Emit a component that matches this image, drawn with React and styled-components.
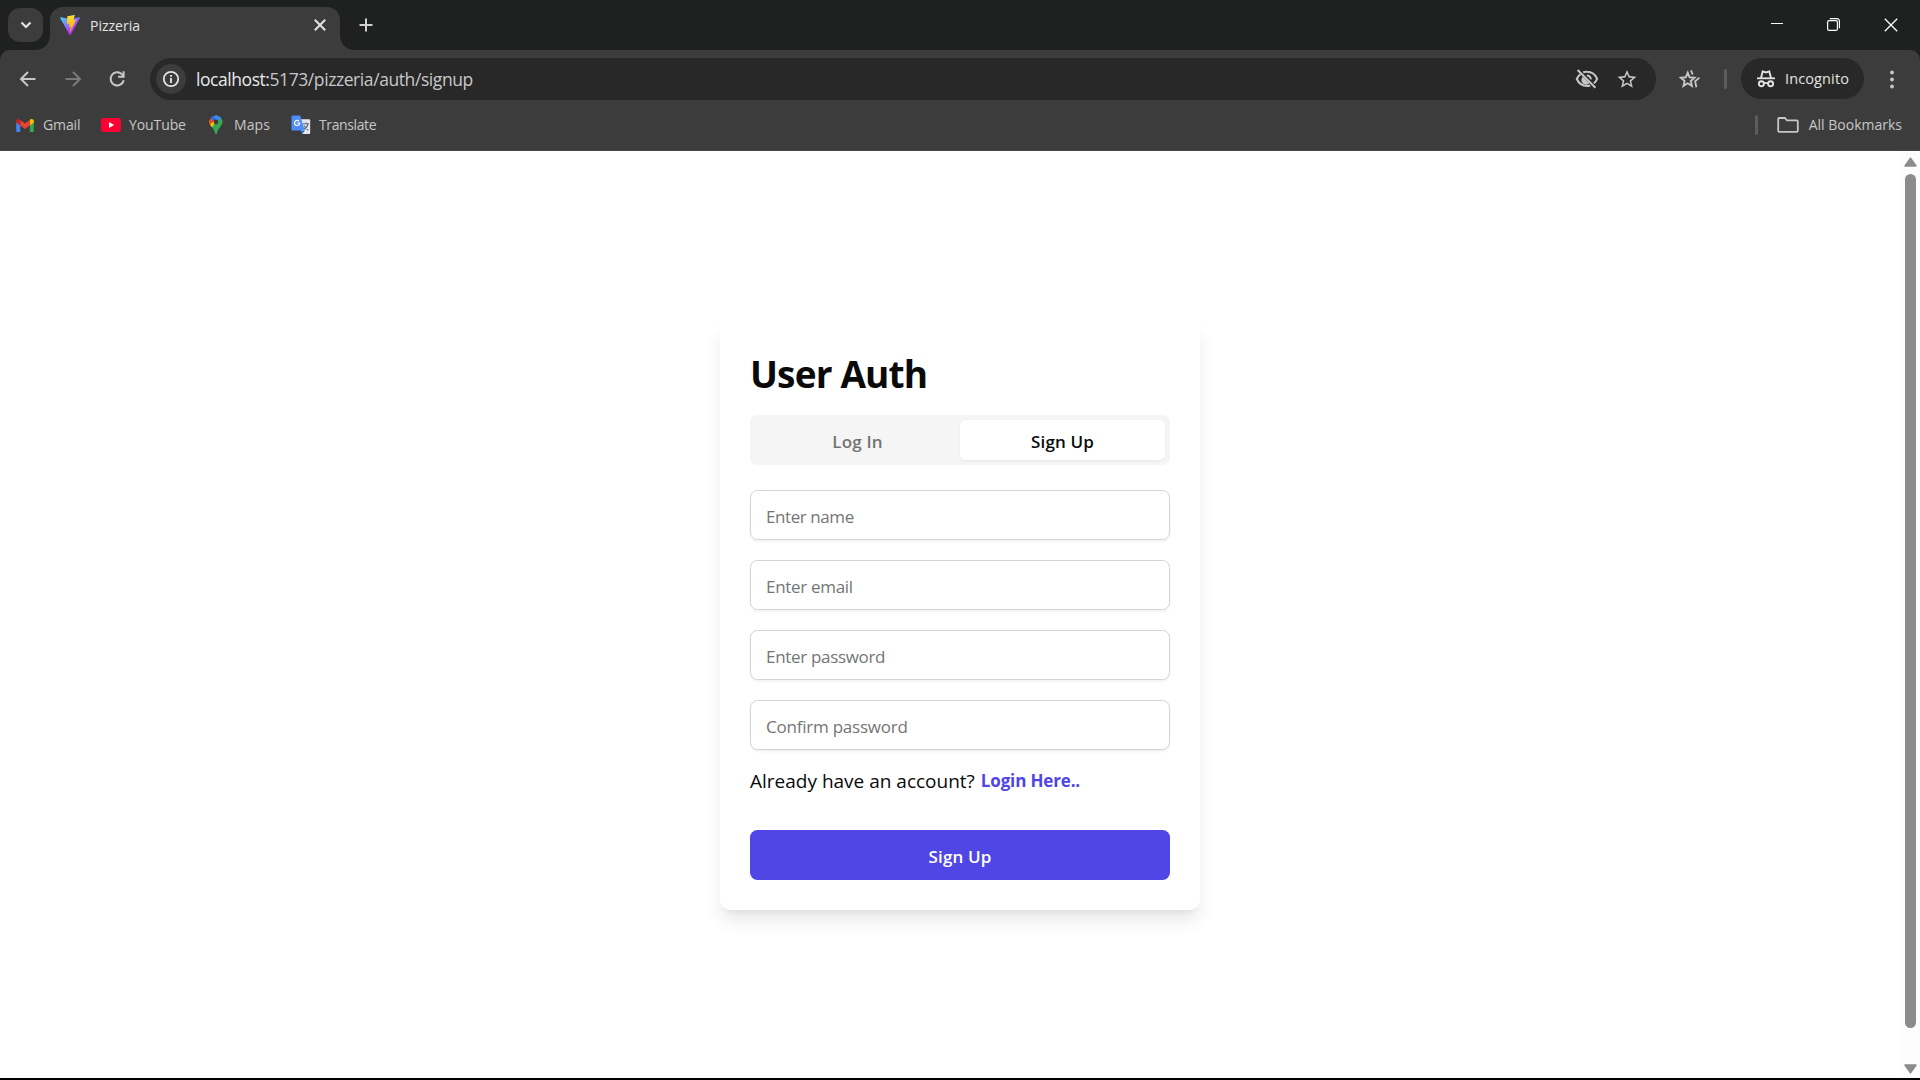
import React from "react";
import styled, { createGlobalStyle } from "styled-components";

const ui = `"Open Sans", "Noto Sans", sans-serif`;

const GlobalStyle = createGlobalStyle`
  * { box-sizing: border-box; }
  html, body { margin: 0; padding: 0; overflow: hidden; background: #000; }
  body { font-family: ${ui}; }
  button, input { font-family: inherit; }
  svg { display: block; flex: none; }
`;

const Window = styled.div`
  width: 1920px;
  height: 1080px;
  display: flex;
  flex-direction: column;
  background: #000;
  overflow: hidden;
`;

const Label = styled.span`
  font-family: ${ui};
  font-size: ${(p) => p.$size}px;
  font-weight: ${(p) => p.$weight || 400};
  letter-spacing: ${(p) => p.$track || 0}px;
  color: ${(p) => p.$color || "inherit"};
  white-space: pre;
`;

/* ---------- tab strip ---------- */
const TabStrip = styled.header`
  height: 50px;
  flex: none;
  display: flex;
  background: #1f2120;
`;

const TabSearch = styled.button`
  width: 35px;
  height: 34px;
  margin: 8px 0 0 8px;
  padding: 0;
  border: 0;
  border-radius: 12px;
  background: #3c3c3c;
  display: flex;
  align-items: center;
  justify-content: center;
`;

const Tab = styled.div`
  position: relative;
  width: 290px;
  height: 43px;
  margin: 7px 0 0 7px;
  padding: 0 14px 7px 10px;
  border-radius: 13px 13px 0 0;
  background: #3c3c3c;
  display: flex;
  align-items: center;
  gap: 10px;
  &::before,
  &::after {
    content: "";
    position: absolute;
    bottom: 0;
    width: 14px;
    height: 14px;
  }
  &::before {
    left: -14px;
    background: radial-gradient(circle at 0 0, transparent 13.5px, #3c3c3c 14.2px);
  }
  &::after {
    right: -14px;
    background: radial-gradient(circle at 100% 0, transparent 13.5px, #3c3c3c 14.2px);
  }
`;

const TabTitle = styled.div`
  flex: 1;
  display: flex;
`;

const NewTab = styled.div`
  margin: 16px 0 0 17px;
`;

const WindowButtons = styled.div`
  margin-left: auto;
  height: 49px;
  display: flex;
  align-items: center;
  gap: 44px;
  padding-right: 22px;
`;

/* ---------- toolbar ---------- */
const ToolbarBack = styled.div`
  flex: none;
  background: #1f2120;
`;

const Chrome = styled.div`
  height: 101px;
  background: #3c3c3c;
  border-radius: 10px 10px 0 0;
  border-bottom: 1px solid #4a4649;
`;

const Toolbar = styled.div`
  height: 50px;
  padding: 8px 18px 0 16px;
  display: flex;
`;

const NavButtons = styled.nav`
  width: 134px;
  height: 41px;
  display: flex;
  align-items: center;
  gap: 20.5px;
`;

const Omnibox = styled.div`
  width: 1506px;
  height: 42px;
  padding: 0 17px 0 6px;
  border-radius: 21px;
  background: #282828;
  display: flex;
  align-items: center;
`;

const SiteInfo = styled.div`
  width: 30px;
  height: 30px;
  margin-right: 10px;
  border-radius: 50%;
  background: #3c3c3c;
  display: flex;
  align-items: center;
  justify-content: center;
`;

const Address = styled.div`
  flex: 1;
  display: flex;
`;

const OmniActions = styled.div`
  display: flex;
  align-items: center;
  gap: 16px;
`;

const ToolbarEnd = styled.div`
  height: 41px;
  flex: 1;
  display: flex;
  align-items: center;
  padding-left: 21px;
`;

const Divider = styled.i`
  width: 3px;
  height: 20px;
  border-radius: 2px;
  background: #5c5c5c;
  margin: ${(p) => p.$margin || 0};
`;

const IncognitoChip = styled.div`
  width: 123px;
  height: 41px;
  padding-left: 15px;
  border-radius: 21px;
  background: #282828;
  display: flex;
  align-items: center;
  gap: 9px;
`;

const MenuDots = styled.div`
  margin-left: auto;
`;

/* ---------- bookmarks ---------- */
const Bookmarks = styled.div`
  height: 50px;
  display: flex;
  align-items: center;
  padding: 0 18px 0 15px;
`;

const Bookmark = styled.div`
  width: ${(p) => p.$width}px;
  display: flex;
  align-items: center;
  gap: 8px;
`;

const AllBookmarks = styled.div`
  margin-left: auto;
  display: flex;
  align-items: center;
`;

const BookmarkName = styled(Label)`
  margin: -2px 0 0 ${(p) => p.$indent || 0}px;
`;

/* ---------- page ---------- */
const Viewport = styled.main`
  height: 927px;
  flex: none;
  display: flex;
  background: #fff;
`;

const Page = styled.div`
  flex: 1;
  display: flex;
  justify-content: center;
  align-items: flex-start;
  padding: 169px 0 0 19px;
`;

const Scrollbar = styled.div`
  width: 19px;
  height: 927px;
  background: #fcfcfc;
  display: flex;
  flex-direction: column;
  align-items: center;
  padding: 6px 0 4px 0;
`;

const Thumb = styled.div`
  width: 11px;
  height: 854px;
  margin: 7px 0 36px;
  border-radius: 6px;
  background: #8b8b8b;
`;

const Card = styled.section`
  width: 480px;
  height: 590px;
  padding: 30px;
  border-radius: 10px;
  background: #fff;
  box-shadow: 0 12.5px 18.75px -3.75px rgba(0, 0, 0, 0.1), 0 5px 7.5px -5px rgba(0, 0, 0, 0.1);
`;

const Title = styled.h1`
  height: 45px;
  margin: 1px 0 19px;
  line-height: 45px;
  font-size: 37.5px;
  display: flex;
`;

const Tabs = styled.div`
  height: 50px;
  padding: 5px;
  border-radius: 7.5px;
  background: #f5f5f5;
  display: flex;
`;

const TabOption = styled.button`
  flex: 1;
  padding: 2px 0 0;
  border: 0;
  border-radius: 5px;
  background: ${(p) => (p.$active ? "#fff" : "transparent")};
  box-shadow: ${(p) => (p.$active ? "0 1px 2.5px rgba(0,0,0,0.06)" : "none")};
`;

const Fields = styled.div`
  display: flex;
  flex-direction: column;
  gap: 20px;
  padding-top: 25px;
`;

const Field = styled.input`
  width: 420px;
  height: 50px;
  padding: 3px 15px 0;
  border: 1px solid #d1d5db;
  border-radius: 7.5px;
  background: #fff;
  box-shadow: 0 1.25px 2.5px rgba(0, 0, 0, 0.05);
  font-size: 17px;
  letter-spacing: ${(p) => p.$track || 0}px;
  outline: 0;
  &::placeholder {
    color: #757575;
    opacity: 1;
  }
`;

const Prompt = styled.p`
  height: 30px;
  margin: 16px 0 34px;
  line-height: 30px;
  display: flex;
  gap: 6px;
`;

const Submit = styled.button`
  width: 420px;
  height: 50px;
  padding: 3px 0 0;
  border: 0;
  border-radius: 7.5px;
  background: #4f46e5;
`;

/* ---------- drawings ---------- */
const stroke = (w, c = "#c7c7c7") => ({ fill: "none", stroke: c, strokeWidth: w });

const ChevronDown = () => (
  <svg width="12" height="8" viewBox="0 0 12 8"><path d="M1.5 1.5 6 6l4.500-4.500" {...stroke(2.2, "#e3e3e3")} /></svg>
);

const ViteLogo = () => (
  <svg width="20" height="20" viewBox="0 0 256 257">
    <defs>
      <linearGradient id="va" x1="-.8%" x2="57.6%" y1="7.7%" y2="78.4%"><stop offset="0" stopColor="#41D1FF" /><stop offset="1" stopColor="#BD34FE" /></linearGradient>
      <linearGradient id="vb" x1="43.4%" x2="50.3%" y1="2.2%" y2="89%"><stop offset="0" stopColor="#FFEA83" /><stop offset=".083" stopColor="#FFDD35" /><stop offset="1" stopColor="#FFA800" /></linearGradient>
    </defs>
    <path fill="url(#va)" d="M255.153 37.938 134.897 252.976c-2.483 4.44-8.862 4.466-11.382.048L.875 37.958c-2.746-4.814 1.371-10.646 6.827-9.67l120.385 21.517a6.537 6.537 0 0 0 2.322-.004l117.867-21.483c5.438-.991 9.574 4.796 6.877 9.62Z" />
    <path fill="url(#vb)" d="M185.432.063 96.44 17.501a3.268 3.268 0 0 0-2.634 3.014l-5.474 92.456a3.268 3.268 0 0 0 3.997 3.378l24.777-5.718c2.318-.535 4.413 1.507 3.936 3.838l-7.361 36.047c-.495 2.426 1.782 4.5 4.151 3.78l15.304-4.649c2.372-.72 4.652 1.36 4.15 3.788l-11.698 56.621c-.732 3.542 3.979 5.473 5.943 2.437l1.313-2.028 72.516-144.72c1.215-2.423-.88-5.186-3.54-4.672l-25.505 4.922c-2.396.462-4.435-1.770-3.759-4.114l16.646-57.705c.677-2.350-1.370-4.583-3.769-4.113Z" />
  </svg>
);

const Cross = ({ size, w, color }) => (
  <svg width={size} height={size} viewBox={`0 0 ${size} ${size}`}>
    <path d={`M.8.8 ${size - 0.8} ${size - 0.8}M${size - 0.8}.8.8 ${size - 0.8}`} {...stroke(w, color)} />
  </svg>
);

const Plus = () => (
  <svg width="18" height="18" viewBox="0 0 18 18"><path d="M9 2.500v13M2.500 9h13" {...stroke(2, "#d0d0d0")} /></svg>
);

const Minimize = () => (
  <svg width="12" height="13" viewBox="0 0 12 13"><path d="M0 5.500h12" {...stroke(1, "#fff")} /></svg>
);

const Restore = () => (
  <svg width="13" height="13" viewBox="0 0 13 13">
    <rect x=".6" y="2.600" width="9.800" height="9.800" rx="1.500" {...stroke(1.2, "#fff")} />
    <path d="M2.800.6h7.200a2.400 2.400 0 0 1 2.400 2.400v7.200" {...stroke(1.2, "#fff")} />
  </svg>
);

const Arrow = ({ flip, color }) => (
  <svg width="24" height="24" viewBox="0 0 24 24">
    <path transform={flip ? "translate(24 0) scale(-1 1)" : undefined} d="M19.500 12H5.500M12 5l-7 7 7 7" {...stroke(2, color)} />
  </svg>
);

const Reload = () => (
  <svg width="24" height="24" viewBox="0 0 24 24">
    <path d="M18.700 13.200A6.600 6.600 0 1 1 16.800 7.100l2 2" {...stroke(2)} />
    <path d="M18.600 4.300v5.500h-5.500" {...stroke(2)} />
  </svg>
);

const Info = () => (
  <svg width="18" height="18" viewBox="0 0 18 18">
    <circle cx="9" cy="9" r="7.200" {...stroke(1.8, "#e3e3e3")} />
    <path d="M9 8v5M9 4.900v1.900" {...stroke(1.9, "#e3e3e3")} />
  </svg>
);

const EyeOff = () => (
  <svg width="24" height="24" viewBox="0 0 24 24">
    <path d="M8.200 5.200A11 11 0 0 1 12 4.800c4.500 0 8.300 2.800 10.200 7a11.500 11.500 0 0 1-3.400 4.500M15.200 18.500a11 11 0 0 1-3.200.5c-4.500 0-8.300-2.800-10.200-7a11.500 11.500 0 0 1 3.600-4.700" {...stroke(2)} />
    <path d="M7.800 9.700a4.600 4.600 0 0 0 6.600 6.600Z" fill="#c7c7c7" />
    <path d="M11.800 8.400a3.800 3.800 0 0 1 4 4" {...stroke(2)} />
    <path d="m2.600 3 17.800 17.800" {...stroke(2)} />
  </svg>
);

const Star = () => (
  <svg width="24" height="24" viewBox="0 0 24 24">
    <path fill="#c7c7c7" d="m22 9.240-7.190-.62L12 2 9.190 8.630 2 9.240l5.460 4.730L5.820 21 12 17.270 18.180 21l-1.630-7.030L22 9.240zM12 15.400l-3.760 2.270 1-4.280-3.320-2.880 4.380-.38L12 6.100l1.710 4.040 4.380.38-3.320 2.880 1 4.280L12 15.400z" transform="translate(0.7 1) scale(.94)" />
  </svg>
);

const StarTrail = () => (
  <svg width="24" height="24" viewBox="0 0 24 24">
    <path d="M10.700 5.700l1.900 4.600 4.900.4-3.700 3.300 1.100 4.900-4.200-2.600-4.200 2.600 1.100-4.900-3.700-3.300 4.900-.4z" {...stroke(1.9)} />
    <path d="M14 3.400l1.700 4.100" {...stroke(1.800)} />
    <path d="M22.400 10.600l-4.300 3.700 1.300 5.900" {...stroke(1.800)} />
  </svg>
);

const Spy = () => (
  <svg width="20" height="20" viewBox="0 0 20 20">
    <path d="M1 9.300h18" {...stroke(1.8, "#e3e3e3")} />
    <path d="M5 9 6.700 2.400l3.300 1 3.300-1L15 9" {...stroke(1.900, "#e3e3e3")} />
    <circle cx="5.400" cy="14.800" r="2.500" {...stroke(1.9, "#e3e3e3")} />
    <circle cx="14.600" cy="14.800" r="2.500" {...stroke(1.9, "#e3e3e3")} />
    <path d="M7.900 14.500q2.100-1.200 4.200 0" {...stroke(1.6, "#e3e3e3")} />
  </svg>
);

const Dots = () => (
  <svg width="20" height="20" viewBox="0 0 20 20" fill="#c7c7c7">
    <circle cx="10" cy="3.500" r="1.900" /><circle cx="10" cy="10.500" r="1.900" /><circle cx="10" cy="17.500" r="1.900" />
  </svg>
);

const Folder = () => (
  <svg width="22" height="16" viewBox="0 0 22 16">
    <path d="M2.200 1h5.600l2.200 2.300h9.800q1 0 1 1v9.500q0 1-1 1H2.200q-1 0-1-1V2q0-1 1-1Z" {...stroke(1.8)} />
  </svg>
);

const Gmail = () => (
  <svg width="20" height="20" viewBox="0 0 20 20">
    <path fill="#4285f4" d="M1.200 6.500 5.200 9.500V17H2.400a1.200 1.200 0 0 1-1.200-1.200Z" />
    <path fill="#34a853" d="M18.800 6.500 14.800 9.500V17h2.800a1.200 1.200 0 0 0 1.200-1.200Z" />
    <path fill="#fbbc04" d="m14.800 5 .7-.7c1.300-1 3.300-.1 3.300 1.600v1.600l-4 3Z" />
    <path fill="#ea4335" d="M5.200 10.500V5L10 8.600 14.800 5v5.500L10 14.100Z" />
    <path fill="#c5221f" d="M1.200 5.900c0-1.700 2-2.600 3.300-1.600l.7.700v5.500l-4-3Z" />
  </svg>
);

const YouTube = () => (
  <svg width="20" height="20" viewBox="0 0 20 20">
    <rect y="3" width="20" height="14" rx="3" fill="#ff0033" />
    <path fill="#fff" d="m8 7 5.200 3L8 13Z" />
  </svg>
);

const MapsPin = () => (
  <svg width="20" height="20" viewBox="0 0 20 20">
    <defs><clipPath id="pin"><path d="M10 .5a6.500 6.500 0 0 1 6.500 6.500c0 3.600-4.500 6-5.600 11.300-.2 1.300-1.600 1.300-1.800 0C8 13 3.500 10.600 3.500 7A6.500 6.500 0 0 1 10 .5Z" /></clipPath></defs>
    <g clipPath="url(#pin)">
      <path fill="#34a853" d="M0 0h20v20H0Z" />
      <path fill="#fbbc04" d="M0 5h10v2L5.200 13H0Z" />
      <path fill="#ea4335" d="M0 0h6l4 7-5.500 3.500L0 8Z" />
      <path fill="#fbbc04" d="m3 10 5.500-4.500L10 7l-4.500 5.500Z" />
      <path fill="#4285f4" d="M4.500 2 10 7l6-4.500L12 0H6Z" />
      <path fill="#1a73e8" d="M4.800 3 8.500 6 10 4.600 7 0Z" />
    </g>
    <circle cx="10" cy="7" r="2.400" fill="#3c3c3c" />
  </svg>
);

const TranslateLogo = () => (
  <svg width="20" height="20" viewBox="0 0 20 20">
    <path fill="#e3e6ea" d="M8 4.200h10.200a1 1 0 0 1 1 1V18a1 1 0 0 1-1 1h-7Z" />
    <path d="M12 8.800h6M15 7.500v1.300M17 9q-1 4-4.500 5.500M13 10.500q1 2.500 4.200 4.800" {...stroke(1.1, "#5f6b7a")} />
    <path fill="#3367d6" d="m10 15.500 4 0-3 3.700Z" />
    <path fill="#4f8df6" d="M1.500.5h7.700l4.600 15H1.500a1 1 0 0 1-1-1v-13a1 1 0 0 1 1-1Z" />
    <path d="M8 6.100A2.600 2.600 0 1 0 8.700 8H6.200" {...stroke(1.200, "#fff")} />
  </svg>
);

const Triangle = ({ down }) => (
  <svg width="13" height="10" viewBox="0 0 13 10">
    <path transform={down ? "rotate(180 6.5 5)" : undefined} fill="#8b8b8b" stroke="#8b8b8b" strokeLinejoin="round" strokeWidth="1.500" d="M6.500 1.200 12 9H1Z" />
  </svg>
);

const bookmarks = [
  { name: "Gmail", Icon: Gmail, width: 86, track: -0.1 },
  { name: "YouTube", Icon: YouTube, width: 105, track: -0.1 },
  { name: "Maps", Icon: MapsPin, width: 85, track: 0.1 },
  { name: "Translate", Icon: TranslateLogo, width: 100, track: -0.38 },
];

const fields = [
  { text: "Enter name", track: -0.42 },
  { text: "Enter email", track: -0.3 },
  { text: "Enter password", track: -0.32 },
  { text: "Confirm password", track: -0.23 },
];

export default function App() {
  return (
    <Window>
      <GlobalStyle />
      <TabStrip>
        <TabSearch><ChevronDown /></TabSearch>
        <Tab>
          <ViteLogo />
          <TabTitle><Label $size={14} $color="#e3e3e3">Pizzeria</Label></TabTitle>
          <Cross size={12} w={2} color="#e3e3e3" />
        </Tab>
        <NewTab><Plus /></NewTab>
        <WindowButtons>
          <Minimize />
          <Restore />
          <Cross size={14} w={1.3} color="#fff" />
        </WindowButtons>
      </TabStrip>

      <ToolbarBack>
        <Chrome>
          <Toolbar>
            <NavButtons>
              <Arrow color="#c7c7c7" />
              <Arrow flip color="#7a7a7a" />
              <Reload />
            </NavButtons>
            <Omnibox>
              <SiteInfo><Info /></SiteInfo>
              <Address>
                <Label $size={17.5} $track={-0.44} $color="#e8e8e8">localhost:</Label>
                <Label $size={17.5} $track={-0.42} $color="#c7c7c7">5173/pizzeria/auth/signup</Label>
              </Address>
              <OmniActions>
                <EyeOff />
                <Star />
              </OmniActions>
            </Omnibox>
            <ToolbarEnd>
              <StarTrail />
              <Divider $margin="0 14px 0 23px" />
              <IncognitoChip>
                <Spy />
                <Label $size={14.5} $track={0.12} $color="#e3e3e3">Incognito</Label>
              </IncognitoChip>
              <MenuDots><Dots /></MenuDots>
            </ToolbarEnd>
          </Toolbar>
          <Bookmarks>
            {bookmarks.map(({ name, Icon, width, track }) => (
              <Bookmark key={name} $width={width}>
                <Icon />
                <BookmarkName $size={14} $track={track} $color="#c7c7c7">{name}</BookmarkName>
              </Bookmark>
            ))}
            <AllBookmarks>
              <Divider $margin="0 19px 0 0" />
              <Folder />
              <BookmarkName $indent={10} $size={14} $color="#c7c7c7">All Bookmarks</BookmarkName>
            </AllBookmarks>
          </Bookmarks>
        </Chrome>
      </ToolbarBack>

      <Viewport>
        <Page>
          <Card>
            <Title><Label $size={37} $weight={700} $track={-0.85} $color="#0a0a0a">User Auth</Label></Title>
            <Tabs>
              <TabOption><Label $size={17} $weight={600} $track={0.15} $color="#737373">Log In</Label></TabOption>
              <TabOption $active><Label $size={17} $weight={600} $track={0.15} $color="#0a0a0a">Sign Up</Label></TabOption>
            </Tabs>
            <Fields>
              {fields.map(({ text, track }) => <Field key={text} placeholder={text} $track={track} />)}
            </Fields>
            <Prompt>
              <Label $size={19} $color="#0a0a0a">Already have an account?</Label>
              <Label $size={17} $weight={700} $track={-0.15} $color="#4f46e5">Login Here..</Label>
            </Prompt>
            <Submit><Label $size={17} $weight={600} $track={0.15} $color="#fff">Sign Up</Label></Submit>
          </Card>
        </Page>
        <Scrollbar>
          <Triangle />
          <Thumb />
          <Triangle down />
        </Scrollbar>
      </Viewport>
    </Window>
  );
}
